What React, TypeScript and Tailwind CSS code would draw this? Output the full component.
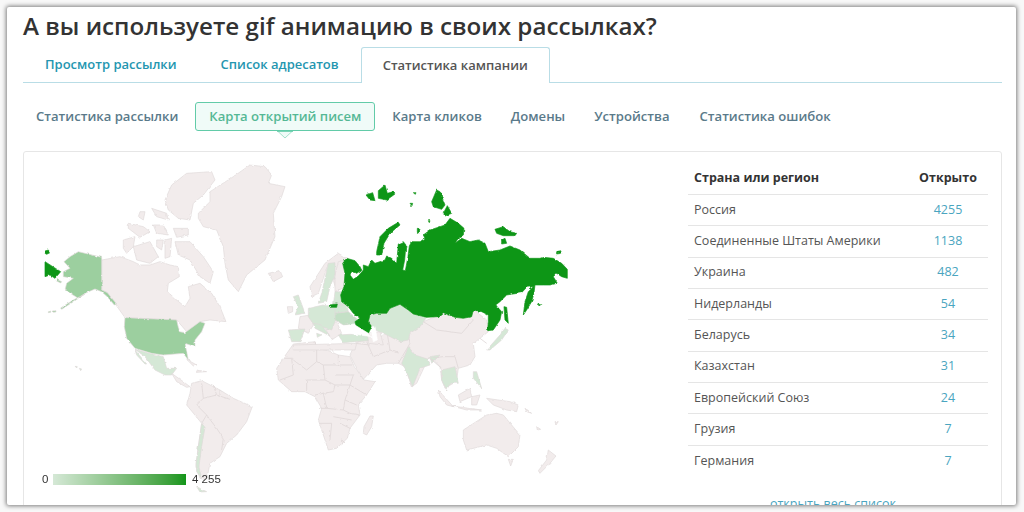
const LAND = "#f2ecec";
const EDGE = "#e0d9d9";
const PALE = "#d5e8d6";
const MID = "#9ccf9f";
const UKR = "#c4e0c6";
const DARK = "#109618";

type Shape = [string, string];

// Each group is written in its own 3x coordinates, placed by the transform of the group.
const northAmerica: Shape[] = [
  [LAND, "M245 330 300 320 340 335 360 345 390 345 420 335 450 345 475 350 478 380 445 400 442 425 470 450 495 470 510 445 505 410 540 400 575 430 600 470 618 515 570 510 540 515 525 540 500 545 470 510 315 503 295 475 262 428 245 420Z"],
  [MID, "M150 320 175 305 245 322 245 420 262 428 290 462 283 465 262 440 245 425 225 417 195 430 175 445 135 420 140 400 160 385 130 380 130 365 150 355 132 335Z"],
  [MID, "M195 432 160 455 125 478 122 474 160 450Z"],
  [MID, "M110 388 125 395 122 399 108 392Z M85 485 92 483 92 487 85 488Z M100 483 108 482 108 486 100 487Z"],
  [MID, "M315 503 470 510 478 545 495 548 540 515 555 520 545 545 525 570 525 590 495 580 505 630 490 610 430 615 395 610 345 595 320 565 313 530Z"],
  [DARK, "M75 335 122 365 105 385 90 375 75 380Z M75 303 85 300 90 308 80 313 75 310Z"],
];
const arctic: Shape[] = [
  [LAND, "M195 120 215 75 260 40 335 35 345 60 310 105 280 130 270 180 235 175 205 150Z"],
  [LAND, "M220 205 265 205 265 225 230 232Z M70 240 105 230 100 260 80 280 70 265Z M100 260 150 245 175 290 150 310 110 300Z"],
  [LAND, "M225 245 270 245 310 290 340 335 330 370 300 350 270 300 235 285Z"],
  [LAND, "M85 190 130 200 150 215 120 232 85 205Z M160 195 190 195 205 225 170 220Z M155 145 200 160 205 180 170 170Z M120 155 135 155 130 180 115 170Z M170 240 190 240 185 270 170 260Z M195 240 215 235 210 290 195 295Z"],
  [LAND, "M295 160 330 125 330 95 400 50 450 15 495 20 515 45 505 70 555 80 545 110 520 160 525 230 495 300 440 345 415 395 385 360 375 310 370 260 350 210 310 200 295 175Z"],
  [LAND, "M505 340 540 332 548 350 520 365Z"],
];
const latinAmerica: Shape[] = [
  [PALE, "M345 28 395 42 430 50 440 85 470 85 455 105 435 105 405 90 375 50Z M345 30 380 72 375 72 350 45Z"],
  [LAND, "M455 100 490 125 510 140 500 142 470 125Z M500 58 530 75 520 78Z M530 90 560 95 530 97Z"],
  [LAND, "M515 130 545 122 600 150 640 175 697 200 680 245 650 285 620 310 600 350 570 370 560 420 540 415 528 380 535 320 545 250 500 195 510 160Z"],
  [PALE, "M545 250 555 262 545 320 537 380 545 415 530 395 528 370 535 320Z"],
  [PALE, "M530 440 560 455 540 456Z"],
  [PALE, "M165 78 172 80 170 84Z M178 85 185 87 182 92Z"],
];
const saLines = "M530 195 550 175 590 165 630 178 M530 195 560 225 590 265 610 295 605 330 M550 175 545 130 M590 165 580 135 M560 225 545 250 M600 150 600 165";
const europe: Shape[] = [
  [LAND, "M90 110 135 40 175 10 200 25 210 60 190 110 170 125 145 40 115 130 95 140Z"],
  [LAND, "M165 75 175 35 198 30 198 110 165 125Z"],
  [LAND, "M22 170 38 170 38 185 25 190Z M60 200 90 195 100 225 85 250 55 235Z M130 225 170 215 185 250 155 270Z M40 285 230 280 225 300 40 300Z M262 250 300 245 310 285 265 280Z"],
  [PALE, "M125 130 145 40 165 38 165 75 150 110 140 155 115 160Z"],
  [PALE, "M40 140 55 135 75 190 45 195 55 170Z"],
  [PALE, "M85 175 130 165 185 175 165 215 155 240 100 222 85 200Z"],
  [PALE, "M165 125 195 125 190 165 160 165Z M165 160 200 165 205 185 165 190Z"],
  [PALE, "M25 240 75 237 60 275 35 275Z M100 220 125 225 150 258 125 245 105 235Z M110 250 125 255 112 262Z"],
  [UKR, "M165 190 205 185 235 210 220 225 190 225 165 210Z"],
  [PALE, "M175 255 260 250 265 272 190 278Z"],
  [DARK, "M148 165 172 162 170 172 150 172Z"],
];
const africa: Shape[] = [
  [LAND, "M100 42 165 35 170 55 205 62 235 75 270 80 283 110 312 150 345 155 320 195 295 225 300 255 270 295 262 325 230 355 205 360 195 330 175 270 185 235 165 200 135 185 95 185 55 150 50 115 70 85Z"],
  [LAND, "M312 290 330 258 340 258 335 290 320 315 310 310Z"],
];
const africaLines = "M70 85 95 85 100 135 60 150 M165 35 170 55 170 95 140 120 100 90 M170 95 190 105 235 105 235 75 M235 105 275 105 M190 105 195 150 140 150 140 180 M195 150 225 165 220 185 190 190 165 195 M225 135 280 135 M280 135 270 165 225 165 M270 165 320 195 M270 165 255 210 290 225 M190 190 200 235 250 240 255 210 M250 240 270 250 300 255 M180 235 200 235 M220 260 275 270 M178 280 215 280 210 330 M240 280 270 295 M245 330 255 338 245 342Z";
const asia: Shape[] = [
  [LAND, "M110 115 130 105 145 120 170 90 235 100 280 65 340 40 380 50 430 28 470 60 475 95 450 115 430 130 435 170 420 195 385 205 380 240 370 250 345 265 335 240 330 200 310 180 295 175 260 250 245 260 225 200 205 190 170 190 140 195 100 238 75 195 60 165 75 130Z"],
  [LAND, "M325 270 370 320 350 315 330 290Z M365 318 455 330 410 330Z M385 285 420 265 425 290 390 305Z M425 290 450 285 440 315 425 315Z M470 295 540 305 565 315 560 335 530 330 490 315Z"],
  [LAND, "M400 390 470 345 500 340 520 345 570 405 565 440 535 470 500 445 470 435 410 450 400 420Z M535 478 550 478 542 498Z M655 450 678 468 660 490 630 520 625 512 650 480Z"],
  [LAND, "M585 325 605 340 590 335Z M620 380 632 388 622 390Z M675 365 685 365 678 375Z"],
  [PALE, "M470 150 510 105 525 85 535 90 515 120 480 150Z M430 215 440 215 455 265 430 235Z M335 210 375 200 385 250 360 250 350 270 335 240Z M300 170 330 165 305 190Z"],
  [PALE, "M235 140 255 165 295 178 300 195 270 205 248 260 225 205 215 190Z"],
];
const asiaLines = "M235 100 240 130 205 190 M170 90 180 150 205 160 M110 125 130 170 180 150 M75 130 120 135 M280 65 320 90 395 100 430 60 M295 175 340 170 M335 205 300 175 M385 205 375 170 340 170 M450 115 470 130";
const russia: Shape[] = [
  [PALE, "M120 435 170 430 180 415 210 403 235 420 290 442 270 470 240 490 235 510 210 515 160 490 135 480 115 455Z"],
  [DARK, "M38 280 50 265 75 272 90 290 95 300 80 310 65 305 60 315 70 328 85 318 100 300 100 285 115 290 125 270 135 280 165 270 170 258 185 265 200 280 205 222 220 215 228 225 224 270 218 300 226 302 234 260 238 228 245 215 270 215 285 205 280 195 300 180 330 170 345 165 360 145 385 160 402 175 400 195 385 205 375 220 395 205 420 215 445 210 465 220 475 245 510 240 540 228 570 240 600 265 630 265 640 262 670 265 695 280 712 298 712 325 695 320 680 310 670 320 682 340 660 345 640 345 615 345 612 370 605 395 590 420 580 435 585 395 595 365 610 350 590 352 575 368 530 375 510 395 497 405 515 425 510 450 490 480 473 482 475 455 475 435 455 425 430 420 425 440 400 445 375 442 340 428 325 440 290 442 250 432 235 420 210 403 180 415 170 430 140 430 120 435 115 455 125 470 115 490 80 475 75 455 90 445 70 430 55 410 35 395 32 375 42 350 45 310Z"],
  [DARK, "M140 245 150 200 175 175 205 157 210 165 180 190 162 220 155 255 140 255Z"],
  [DARK, "M305 95 320 60 330 65 345 105 335 118 310 110Z M340 130 352 107 365 130 345 138Z"],
  [DARK, "M495 178 520 170 540 185 560 190 555 197 520 197 500 190Z M515 210 525 205 530 220 515 222Z M680 245 692 242 695 250 680 252Z M522 410 530 412 535 460 525 450Z"],
  [DARK, "M108 75 128 68 135 92 120 90Z M145 62 165 45 172 70 190 65 195 72 170 90 145 85Z M240 100 248 100 246 107Z M250 68 258 68 256 73Z M262 175 270 175 268 192 262 190Z M295 152 300 152 298 158Z M622 402 632 404 628 408Z"],
  ["#ffffff", "M35 470 70 462 115 490 125 500 70 492 40 482Z M125 470 135 470 142 510 130 515 125 490Z"],
];

function Region({ x, y, shapes, lines }: { x: number; y: number; shapes: Shape[]; lines?: string }) {
  return (
    <g transform={`translate(${x} ${y}) scale(0.3333)`}>
      {shapes.map(([fill, d], i) => (
        <path key={i} d={d} fill={fill} stroke={fill === DARK ? DARK : fill === "#ffffff" ? "#ffffff" : EDGE} strokeWidth="2" strokeLinejoin="round" />
      ))}
      {lines && <path d={lines} fill="none" stroke={EDGE} strokeWidth="2.5" strokeLinejoin="round" />}
    </g>
  );
}

const rows: [string, string][] = [
  ["Россия", "4255"],
  ["Соединенные Штаты Америки", "1138"],
  ["Украина", "482"],
  ["Нидерланды", "54"],
  ["Беларусь", "34"],
  ["Казахстан", "31"],
  ["Европейский Союз", "24"],
  ["Грузия", "7"],
  ["Германия", "7"],
];

export default function App() {
  return (
    <div className="h-[512px] w-[1024px] overflow-hidden bg-[#f8f8f8] pl-[7px] pt-[7px] font-['Open_Sans',sans-serif]">
      <div className="h-[498px] w-[1009px] overflow-hidden rounded-[2px] bg-white pl-[16px] pr-[14px] shadow-[0_0_4px_1px_rgba(0,0,0,0.5)]">
        <h1 className="h-[40px] whitespace-nowrap text-[24.2px] font-semibold leading-[37px] text-[#333333]">
          А вы используете gif анимацию в своих рассылках?
        </h1>
        <div className="flex h-[36px] border-b border-[#b9dde6] text-[13px] font-semibold">
          <div className="px-[22px] leading-[35px] text-[#2496b0]">Просмотр рассылки</div>
          <div className="px-[22px] leading-[35px] text-[#2496b0]">Список адресатов</div>
          <div className="h-[36px] rounded-t-[3px] border border-b-0 border-[#b9dde6] bg-white px-[21px] leading-[34px] text-[#555555]">
            Статистика кампании
          </div>
        </div>
        <div className="mt-[18px] flex h-[31px] items-center pl-[13px] text-[13.1px] font-semibold text-[#5a7a8a]">
          <div>Статистика рассылки</div>
          <div className="relative ml-[17px] h-[29px] w-[180px] rounded-[3px] border border-[#62cba8] bg-[#f0fbf8] text-center leading-[27px] text-[#55b895]">
            Карта открытий писем
            <svg className="absolute left-[81px] top-[28px]" width="16" height="8" viewBox="0 0 16 8">
              <path d="M0.5 0 8 7 15.5 0Z" fill="#f0fbf8" stroke="#a5e2cc" strokeWidth="1" />
              <path d="M0 0H16" stroke="#62cba8" strokeWidth="1.5" />
            </svg>
          </div>
          <div className="ml-[17px]">Карта кликов</div>
          <div className="ml-[29px]">Домены</div>
          <div className="ml-[29px]">Устройства</div>
          <div className="ml-[30px]">Статистика ошибок</div>
        </div>
        <div className="mt-[19px] flex h-[400px] rounded-[3px] border border-[#e6e6e6] bg-white">
          <div className="relative h-[353px] w-[650px] shrink-0">
            <svg width="650" height="353" viewBox="24 152 650 353">
              <defs>
                <filter id="rough" x="-5%" y="-5%" width="110%" height="110%">
                  <feTurbulence type="fractalNoise" baseFrequency="0.22" numOctaves="2" seed="4" result="noise" />
                  <feDisplacementMap in="SourceGraphic" in2="noise" scale="2.5" xChannelSelector="R" yChannelSelector="G" result="moved" />
                  <feGaussianBlur in="moved" stdDeviation="0.3" />
                </filter>
              </defs>
              <g filter="url(#rough)">
                <Region x={100} y={160} shapes={arctic} />
                <Region x={20} y={150} shapes={northAmerica} />
                <Region x={20} y={340} shapes={latinAmerica} lines={saLines} />
                <Region x={260} y={330} shapes={africa} lines={africaLines} />
                <Region x={330} y={300} shapes={asia} lines={asiaLines} />
                <Region x={280} y={250} shapes={europe} />
                <Region x={330} y={170} shapes={russia} />
              </g>
            </svg>
            <div className="absolute left-[18px] top-[322px] flex h-[11px] items-center font-['Liberation_Sans',sans-serif] text-[11.5px] leading-none text-[#333333]">
              <span className="w-[11px]">0</span>
              <div className="h-[11px] w-[133px] bg-gradient-to-r from-[#d5e8d6] to-[#109618]" />
              <span className="ml-[6px]">4 255</span>
            </div>
          </div>
          <div className="ml-[14px] w-[300px] pt-[11px] text-[12.5px]">
            <div className="flex h-[32px] items-center border-b border-[#e5e5e5] font-bold text-[#333333]">
              <div className="flex-1 pl-[6px]">Страна или регион</div>
              <div className="w-[80px] text-center">Открыто</div>
            </div>
            {rows.map(([name, n], i) => (
              <div key={name} className={i < rows.length - 1 ? "flex h-[31.33px] items-center border-b border-[#e5e5e5] text-[#555555]" : "flex h-[31.33px] items-center text-[#555555]"}>
                <div className="flex-1 pl-[6px]">{name}</div>
                <div className="w-[80px] text-center text-[#4aa5c0]">{n}</div>
              </div>
            ))}
            <div className="mt-[18px] pr-[10px] text-center text-[#4aa5c0]">открыть весь список</div>
          </div>
        </div>
      </div>
    </div>
  );
}
